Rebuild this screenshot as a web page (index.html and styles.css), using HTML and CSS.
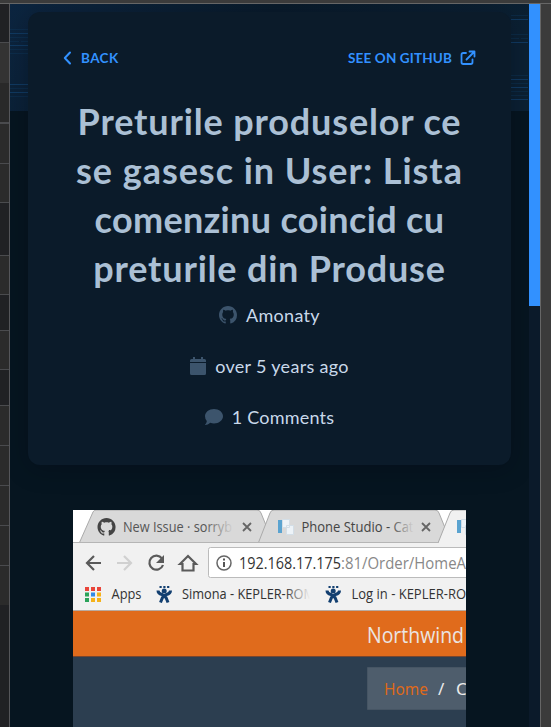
FILE: index.html
```html
<!DOCTYPE html>
<html lang="en">
<head>
<meta charset="utf-8">
<title>Issue</title>
<link rel="stylesheet" href="styles.css">
</head>
<body>
<div class="window">
  <aside class="rail">
    <i class="r1"></i><i class="r2"></i><i class="r3"></i><i class="r4"></i><i class="r5"></i><i class="r6"></i><i class="r7"></i><i class="r8"></i><i class="r9"></i><i class="r10"></i><i class="r11"></i><i class="r11"></i><i class="r11"></i><i class="r11"></i><i class="r12"></i>
  </aside>
  <main class="page">
    <svg class="banner" width="519" height="107" viewBox="0 0 519 107" aria-hidden="true">
      <defs><linearGradient id="bg" x2="1" y2=".2"><stop stop-color="#0c2540"/><stop offset=".5" stop-color="#091b2b"/><stop offset="1" stop-color="#0b2033"/></linearGradient></defs>
      <path fill="url(#bg)" d="M0 0h519v107H0z"/>
      <g fill="none" stroke="#103960">
        <path d="M0 29.500h18M0 41.500h18M0 80.500h18M0 88.500h18M501 15.500h17M501 38.500h17M501 75.500h17M501 83.500h17M501 95.500h17"/>
        <path opacity=".4" d="M0 25.500h18M0 33.500h18M0 37.500h9m2 0h7M0 45.500h18M0 49.500h18M0 84.500h18M0 92.500h18M501 11.500h17M501 30.500h17M501 34.500h8m2 0h7M501 71.500h17M501 79.500h17M501 87.500h17M501 91.500h17"/>
      </g>
    </svg>
    <article class="card">
      <nav class="actions">
        <a class="link"><svg width="9" height="14" viewBox="0 0 9 14"><path d="M7 1.500 1.800 7 7 12.500" fill="none" stroke="currentColor" stroke-width="2" stroke-linecap="round" stroke-linejoin="round"/></svg><span class="back">BACK</span></a>
        <a class="link"><span class="see">SEE ON GITHUB</span><svg width="16" height="16" viewBox="0 0 16 16"><path d="M6 3H3.200Q1.500 3 1.500 4.700v7.600Q1.500 14 3.200 14h7.600q1.700 0 1.700-1.700V9.500M9.500 1.500h5v5M14 2 6.500 9.500" fill="none" stroke="currentColor" stroke-width="1.800" stroke-linecap="round" stroke-linejoin="round"/></svg></a>
      </nav>
      <h1><span class="l1">Preturile produselor ce</span><span class="l2">se gasesc in User: Lista</span><span class="l3">comenzinu coincid cu</span><span class="l4">preturile din Produse</span></h1>
      <ul class="meta">
        <li><svg width="18" height="18" viewBox="0 0 16 16"><path fill="currentColor" d="M8 0C3.580 0 0 3.580 0 8c0 3.540 2.290 6.530 5.470 7.590.4.070.55-.17.55-.38 0-.19-.01-.82-.01-1.490-2.010.37-2.530-.49-2.690-.94-.09-.23-.48-.94-.82-1.130-.28-.15-.68-.52-.01-.53.630-.01 1.080.58 1.230.82.720 1.210 1.870.87 2.330.66.070-.52.280-.87.510-1.070-1.780-.2-3.640-.89-3.640-3.950 0-.87.310-1.590.82-2.150-.08-.2-.36-1.020.08-2.120 0 0 .67-.21 2.200.82.640-.18 1.320-.27 2-.27s1.360.09 2 .27c1.530-1.040 2.200-.82 2.200-.82.440 1.100.16 1.920.08 2.120.51.560.82 1.270.82 2.150 0 3.070-1.870 3.750-3.650 3.950.29.250.54.730.54 1.480 0 1.070-.01 1.930-.01 2.200 0 .21.150.46.55.38A8.010 8.010 0 0 0 16 8c0-4.420-3.580-8-8-8z"/></svg><span class="m1">Amonaty</span></li>
        <li><svg width="16" height="18" viewBox="0 0 16 18"><path fill="currentColor" d="M3 0h2v2h6V0h2v2h1.500Q16 2 16 3.500V5H0V3.500Q0 2 1.500 2H3zM0 6h16v10.500q0 1.500-1.500 1.500h-13Q0 18 0 16.500z"/></svg><span class="m2">over 5 years ago</span></li>
        <li><svg width="18" height="16" viewBox="0 0 18 16"><path fill="currentColor" d="M9 0c5 0 9 3.200 9 7.200s-4 7.200-9 7.200q-2 0-3.800-.7C3.500 15 1.800 16 .4 16c-.4 0-.4-.3-.2-.6.8-.9 1.500-2.200 1.600-3.500Q0 10 0 7.200C0 3.200 4 0 9 0z"/></svg><span class="m3">1 Comments</span></li>
      </ul>
    </article>
    <svg class="shot" width="393" height="217" viewBox="73 510 393 217">
      <defs>
        <linearGradient id="f1" gradientUnits="userSpaceOnUse" x1="205" x2="234"><stop stop-color="#555"/><stop offset="1" stop-color="#d9d9d9"/></linearGradient>
        <linearGradient id="f2" gradientUnits="userSpaceOnUse" x1="390" x2="414"><stop stop-color="#444"/><stop offset="1" stop-color="#d9d9d9"/></linearGradient>
        <linearGradient id="f3" gradientUnits="userSpaceOnUse" x1="285" x2="310"><stop stop-color="#333"/><stop offset="1" stop-color="#f1f1f1"/></linearGradient>
        <g id="jira"><path fill="none" stroke="#123f70" stroke-width="3" d="M1 5q0 3 4 4l4 3 2 5M13.500 5q0 3-4 4l-4 3-2 5"/><circle cx="7.200" cy="5.500" r="2.500" fill="#123f70"/><path stroke="#123f70" stroke-width="2" stroke-dasharray="2.200 1.600" d="M2.500 1.500h10"/></g>
        <g id="doc"><path fill="#5aa3d0" d="M0 0h4v13H0z"/><path fill="#edf3f8" stroke="#d3dee7" d="M4.500-.5h7v8h-7zM8.500 5.500h7v9h-7z"/></g>
      </defs>
      <path fill="#fff" d="M73 510h393v33H73z"/>
      <path fill="#f1f1f1" d="M73 543h393v69H73z"/>
      <g fill="#d9d9d9" stroke="#aaa">
        <path d="M79.500 542.500 93 512q1-2 3-2h161q3 0 4 3l12 29.500z"/>
        <path d="M258.500 542.500 270 513q1-3 4-3h161q3 0 4 3l12 29.500z"/>
      </g>
      <path fill="#f1f1f1" stroke="#aaa" d="M438 543 450 513q1-3 4-3h20v33"/>
      <path stroke="#b5b5b5" d="M73 542.500h365"/>
      <path fill="#444" transform="translate(97.500 518) scale(1.130)" d="M8 0C3.580 0 0 3.580 0 8c0 3.540 2.290 6.530 5.470 7.590.4.070.55-.17.55-.38 0-.19-.01-.82-.01-1.490-2.010.37-2.530-.49-2.690-.94-.09-.23-.48-.94-.82-1.130-.28-.15-.68-.52-.01-.53.630-.01 1.080.58 1.230.82.720 1.210 1.870.87 2.330.66.070-.52.280-.87.510-1.070-1.780-.2-3.640-.89-3.640-3.950 0-.87.310-1.590.82-2.150-.08-.2-.36-1.020.08-2.120 0 0 .67-.21 2.200.82.640-.18 1.320-.27 2-.27s1.360.09 2 .27c1.530-1.040 2.200-.82 2.200-.82.440 1.100.16 1.920.08 2.120.51.560.82 1.270.82 2.150 0 3.070-1.870 3.750-3.650 3.950.29.250.54.730.54 1.480 0 1.070-.01 1.930-.01 2.200 0 .21.150.46.55.38A8.010 8.010 0 0 0 16 8c0-4.420-3.580-8-8-8z"/>
      <path fill="none" stroke="#666" stroke-width="1.800" d="m243 523 8 8m0-8-8 8M422 523l8 8m0-8-8 8"/>
      <use href="#doc" x="278" y="520"/><use href="#doc" x="457" y="520"/>
      <text x="123" y="531.500" font-size="14" fill="url(#f1)" textLength="109" lengthAdjust="spacingAndGlyphs">New Issue · sorryb</text>
      <text x="301.500" y="531.500" font-size="14" fill="url(#f2)" textLength="112" lengthAdjust="spacingAndGlyphs">Phone Studio - Cat</text>
      <g fill="none" stroke="#5a5a5a" stroke-width="2.200">
        <path d="M101 563H87m7-7-7 7 7 7"/>
        <path stroke="#d0d0d0" d="M117 563h14m-7-7 7 7-7 7"/>
        <path d="M162 558.500a7 7 0 1 0 1 6.500"/><path fill="#5a5a5a" stroke="none" d="M164 555v8h-8z"/>
        <path d="m180 564 8-8 8 8h-2.500v6.500h-11V564z"/>
      </g>
      <rect x="208.500" y="547.500" width="280" height="30" rx="2" fill="#fff" stroke="#bbb"/>
      <circle cx="224" cy="563" r="7" fill="none" stroke="#666" stroke-width="1.500"/>
      <path stroke="#555" stroke-width="2" d="M224 562v5M224 558.500v2"/>
      <text x="239" y="568.500" font-size="16" fill="#333" textLength="102" lengthAdjust="spacingAndGlyphs">192.168.17.175</text>
      <text x="341" y="568.500" font-size="16" fill="#888" textLength="125" lengthAdjust="spacingAndGlyphs">:81/Order/HomeA</text>
      <g><path fill="#e9453a" d="M85 587h4v4h-4zM91 587h4v4h-4zM97 587h4v4h-4z"/><path fill="#2ba35a" d="M85 592.500h4v4h-4zM85 598h4v4h-4z"/><path fill="#318bea" d="M91 592.500h4v4h-4z"/><path fill="#f5b21a" d="M97 592.500h4v4h-4zM91 598h4v4h-4zM97 598h4v4h-4z"/></g>
      <use href="#jira" x="157" y="585.500"/><use href="#jira" x="326" y="585.500"/>
      <text x="111.500" y="599" font-size="14" fill="#333" textLength="30" lengthAdjust="spacingAndGlyphs">Apps</text>
      <text x="182" y="599" font-size="14" fill="url(#f3)" textLength="133" lengthAdjust="spacingAndGlyphs">Simona - KEPLER-ROM</text>
      <text x="351.500" y="599" font-size="14" fill="#333" textLength="114.500" lengthAdjust="spacingAndGlyphs">Log in - KEPLER-RO</text>
      <path fill="#b9aaa0" d="M73 610h393v1H73z"/>
      <path fill="#e06b1c" d="M73 611h393v45H73z"/>
      <path fill="#2c3e50" d="M73 656h393v71H73z"/>
      <path stroke="#77452e" d="M73 656.500h393"/>
      <path fill="#4e5d6c" stroke="#465564" d="M367.500 667.500h110v42h-110z"/>
      <text class="strong" x="367" y="642.500" font-size="21" fill="#ebe5e2" textLength="97" lengthAdjust="spacingAndGlyphs">Northwind</text>
      <text class="crumb" x="384" y="694.500" font-size="17" fill="#df691a" textLength="44" lengthAdjust="spacingAndGlyphs">Home</text>
      <text class="crumb" x="438" y="694.500" font-size="17" fill="#ebebeb">/</text>
      <text class="crumb" x="456" y="694.500" font-size="17" fill="#ebebeb">C</text>
    </svg>
  </main>
  <div class="scroll"><div class="thumb"></div></div>
  <div class="edge"></div>
</div>
</body>
</html>
```
FILE: styles.css
```css
* { box-sizing: border-box; }
body { margin: 0; width: 551px; height: 727px; overflow: hidden; background: #3b3b3b; font-family: Lato, "Open Sans", sans-serif; }
.window { display: grid; grid-template-columns: 10px 519px 11px 11px; height: 724px; margin-top: 3px; border-top: 1px solid #666; }
.rail { display: flex; flex-direction: column; background: #202124; border-right: 1px solid #55565a; }
.rail i { flex: none; border-bottom: 1px solid #4a4b4e; background: #2b2b2b; }
.rail .r1 { height: 39px; background: #202124; }
.rail .r2 { height: 40px; background: #333; border: 0; }
.rail .r3 { height: 41px; background: #292929; border-bottom-width: 2px; }
.rail .r4 { height: 40px; }
.rail .r5 { height: 39px; }
.rail .r6 { height: 53px; background: #202124; }
.rail .r7 { height: 39px; }
.rail .r8 { height: 36px; background: #202124; }
.rail .r9 { height: 39px; }
.rail .r10 { height: 36px; background: #202124; }
.rail .r11 { height: 40px; }
.rail .r12 { height: 39px; border: 0; }
.page { position: relative; height: 723px; overflow: hidden; background: #061520; padding: 8px 18px 0; }
.banner { position: absolute; left: 0; top: 0; }
.card { position: relative; height: 453px; border-radius: 12px; background: #0b1b2a; box-shadow: 0 4px 24px rgba(0, 5, 15, .25); }
.actions { display: flex; justify-content: space-between; padding: 37px 35px 0 35px; height: 85px; }
.link { display: flex; align-items: center; height: 18px; gap: 9px; color: #3291ff; font-size: 13.500px; font-weight: 700; line-height: 18px; }
.link span, .meta span, h1 span { white-space: nowrap; }
.back { letter-spacing: .4px; }
.see { letter-spacing: .15px; margin-right: -1px; }
h1 { margin: 0; color: #abc0d5; font-size: 36px; font-weight: 700; line-height: 49px; text-align: center; }
h1 span { display: block; }
.l1 { letter-spacing: .85px; }
.l2 { letter-spacing: .95px; }
.l3 { letter-spacing: .35px; }
.l4 { letter-spacing: .8px; }
.meta { list-style: none; margin: 10px 0 0; padding: 0; color: #3c546c; }
.meta li { display: flex; justify-content: center; align-items: center; gap: 9px; height: 24px; margin-bottom: 27px; }
.meta span { color: #c9d9ea; font-size: 18px; line-height: 24px; }
.m1 { letter-spacing: .3px; }
.m2 { letter-spacing: .32px; }
.m3 { letter-spacing: .2px; }
.shot { display: block; margin: 45px 0 0 45px; font-family: "Open Sans", sans-serif; }
.strong { font-weight: 500; }
.crumb { font-family: "Noto Sans", sans-serif; }
.scroll { background: #0b1a2a; }
.thumb { height: 302px; background: #3291ff; }
.edge { border-left: 1px solid #666; background: #3b3b3b; }
```
